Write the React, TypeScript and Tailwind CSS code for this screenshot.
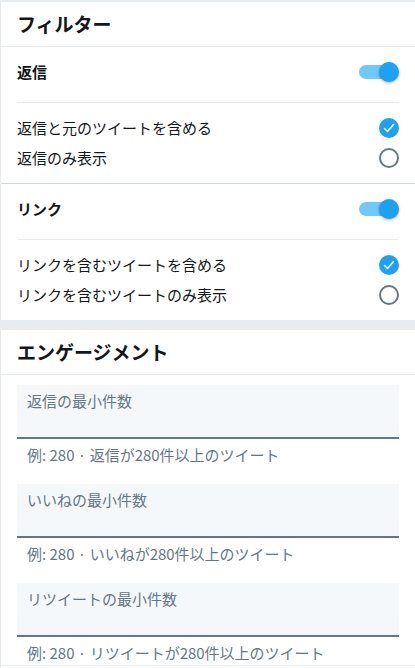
import React, { useState } from 'react';

const font = { fontFamily: '"Noto Sans CJK JP", "Noto Sans", sans-serif' };

function Toggle({ on, onChange }: { on: boolean; onChange: () => void }) {
  return (
    <button onClick={onChange} className="relative w-[40px] h-[20px] flex items-center">
      <span className={`absolute left-[0px] right-[5px] h-[14px] rounded-full ${on ? 'bg-[#71c9f8]' : 'bg-[#ccd6dd]'}`} />
      <span
        className={`absolute top-0 w-[20px] h-[20px] rounded-full shadow-[0_1px_3px_rgba(0,0,0,0.35)] ${on ? 'left-[20px] bg-[#1da1f2]' : 'left-0 bg-white'}`}
      />
    </button>
  );
}

function Radio({ checked, onClick }: { checked: boolean; onClick: () => void }) {
  return (
    <button onClick={onClick} className="w-[20px] h-[20px] shrink-0">
      {checked ? (
        <span className="flex w-[20px] h-[20px] rounded-full bg-[#1da1f2] items-center justify-center">
          <svg width="12" height="12" viewBox="0 0 12 12" fill="none">
            <path d="M1.5 6.5 L4.5 9.5 L10.5 2.5" stroke="white" strokeWidth="1.6" strokeLinecap="round" strokeLinejoin="round" />
          </svg>
        </span>
      ) : (
        <span className="block w-[20px] h-[20px] rounded-full border-2 border-[#657786]" />
      )}
    </button>
  );
}

function FilterGroup({ title, options }: { title: string; options: string[] }) {
  const [on, setOn] = useState(true);
  const [sel, setSel] = useState(0);
  return (
    <div className="px-4">
      <div className="h-[56px] pb-[6px] flex items-center justify-between border-b border-[#e6ecf0]">
        <span className="text-[15px] font-bold text-[#14171a] leading-5">{title}</span>
        <Toggle on={on} onChange={() => setOn(!on)} />
      </div>
      <div className="py-[10px]">
        {options.map((o, i) => (
          <div key={o} className="h-[30px] flex items-center justify-between">
            <span className="text-[15px] text-[#14171a] leading-5">{o}</span>
            <Radio checked={sel === i} onClick={() => setSel(i)} />
          </div>
        ))}
      </div>
    </div>
  );
}

function NumberField({ label, help }: { label: string; help: string }) {
  return (
    <div>
      <div className="h-[54px] bg-[#f5f8fa] border-b-2 border-[#657786] px-[10px] pt-[3px]">
        <input
          placeholder={label}
          className="w-full bg-transparent outline-none text-[15px] leading-5 text-[#14171a] placeholder:text-[#657786]"
          style={font}
        />
      </div>
      <p className="px-[10px] pt-[6px] text-[15px] leading-5 text-[#657786]">{help}</p>
    </div>
  );
}

export default function App() {
  return (
    <div className="w-[415px] h-[668px] overflow-hidden bg-white border-t-2 border-l border-[#e6ecf0]" style={font}>
      <div className="h-[45px] px-4 flex items-center border-b border-[#e6ecf0]">
        <h2 className="text-[19px] font-bold text-[#14171a] leading-6">フィルター</h2>
      </div>

      <div className="border-b border-[#ccd6dd]">
        <FilterGroup title="返信" options={['返信と元のツイートを含める', '返信のみ表示']} />
      </div>
      <FilterGroup title="リンク" options={['リンクを含むツイートを含める', 'リンクを含むツイートのみ表示']} />

      <div className="h-[10px] bg-[#e6ecf0]" />

      <div className="h-[45px] px-4 flex items-center border-b border-[#e6ecf0]">
        <h2 className="text-[19px] font-bold text-[#14171a] leading-6">エンゲージメント</h2>
      </div>

      <div className="px-4 pt-[10px] pb-[2px] flex flex-col gap-[19px] border-b border-[#e6ecf0]">
        <NumberField label="返信の最小件数" help="例: 280 · 返信が280件以上のツイート" />
        <NumberField label="いいねの最小件数" help="例: 280 · いいねが280件以上のツイート" />
        <NumberField label="リツイートの最小件数" help="例: 280 · リツイートが280件以上のツイート" />
      </div>
    </div>
  );
}
